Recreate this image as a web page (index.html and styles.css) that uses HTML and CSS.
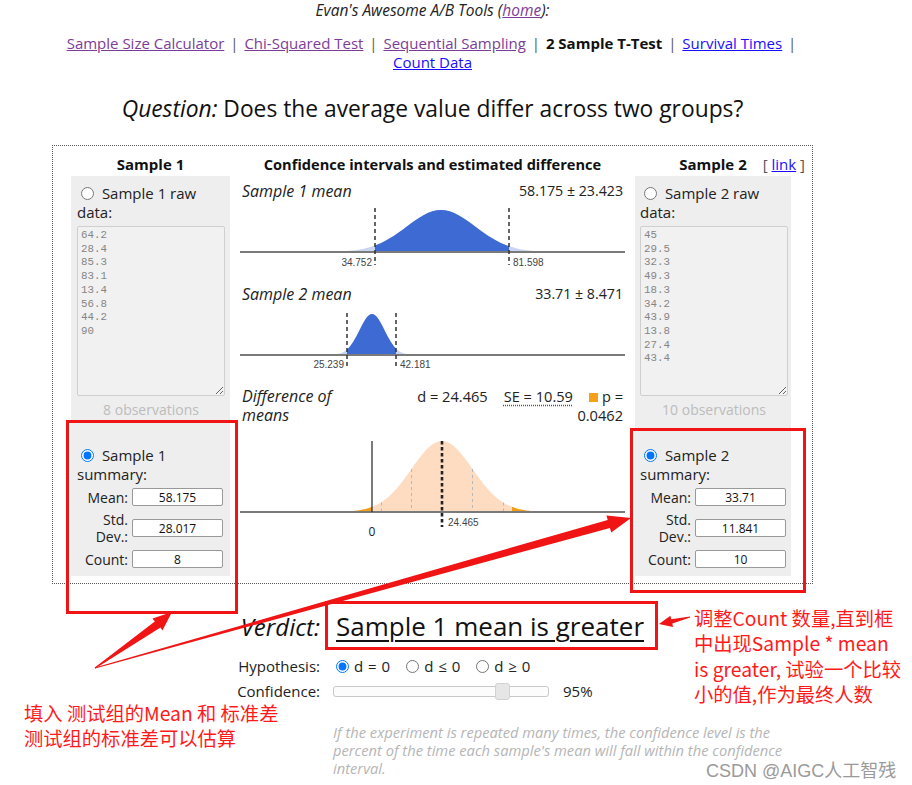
FILE: index.html
```html
<!DOCTYPE html>
<html lang="en">
<head>
<meta charset="utf-8">
<title>2 Sample T-Test</title>
<link rel="stylesheet" href="styles.css">
</head>
<body>
<div class="page">
  <div class="tools">Evan's Awesome A/B Tools (<a class="visited" href="#">home</a>):</div>
  <nav class="nav">
    <a class="visited" href="#">Sample Size Calculator</a> <span class="sep">|</span>
    <a class="visited" href="#">Chi-Squared Test</a> <span class="sep">|</span>
    <a class="visited" href="#">Sequential Sampling</a> <span class="sep">|</span>
    <b class="current">2 Sample T-Test</b> <span class="sep">|</span>
    <a class="fresh" href="#">Survival Times</a> <span class="sep">|</span>
    <a class="fresh" href="#">Count Data</a>
  </nav>
  <h1 class="question"><i>Question:</i> Does the average value differ across two groups?</h1>

  <div class="box">
    <div class="side side-left">
      <div class="side-head">Sample 1</div>
      <div class="panel">
        <label class="opt"><input type="radio" name="mode1"> Sample 1 raw data:</label>
        <textarea class="raw" disabled>64.2
28.4
85.3
83.1
13.4
56.8
44.2
90</textarea>
        <div class="obs">8 observations</div>
        <label class="opt opt-summary"><input type="radio" name="mode1" checked> Sample 1 summary:</label>
        <div class="fields">
          <span class="flabel">Mean:</span><input class="fin" type="text" value="58.175">
          <span class="flabel">Std. Dev.:</span><input class="fin" type="text" value="28.017">
          <span class="flabel">Count:</span><input class="fin" type="text" value="8">
        </div>
      </div>
    </div>

    <div class="center">
      <div class="center-head">Confidence intervals and estimated difference</div>

      <div class="crow">
        <span class="clabel">Sample 1 mean</span>
        <span class="cval">58.175 ± 23.423</span>
      </div>
      <svg class="chart chart1" width="385" height="72" viewBox="0 0 385 72">
        <defs>
          <clipPath id="ci1"><rect x="135" y="0" width="134" height="72"/></clipPath>
        </defs>
        <path class="curve-faint" transform="translate(201 52) scale(34.2 -42)" d="M-4,0 L-3.5,0.0022 L-3,0.0111 L-2.75,0.0228 L-2.5,0.0439 L-2.375,0.0596 L-2.25,0.0796 L-2.125,0.1046 L-2,0.1353 L-1.875,0.1724 L-1.75,0.2163 L-1.625,0.2671 L-1.5,0.3247 L-1.375,0.3886 L-1.25,0.4578 L-1.125,0.5311 L-1,0.6065 L-0.875,0.6819 L-0.75,0.7548 L-0.625,0.8226 L-0.5,0.8825 L-0.375,0.9321 L-0.25,0.9692 L-0.125,0.9922 L0,1 L0.125,0.9922 L0.25,0.9692 L0.375,0.9321 L0.5,0.8825 L0.625,0.8226 L0.75,0.7548 L0.875,0.6819 L1,0.6065 L1.125,0.5311 L1.25,0.4578 L1.375,0.3886 L1.5,0.3247 L1.625,0.2671 L1.75,0.2163 L1.875,0.1724 L2,0.1353 L2.125,0.1046 L2.25,0.0796 L2.375,0.0596 L2.5,0.0439 L2.75,0.0228 L3,0.0111 L3.5,0.0022 L4,0 Z"/>
        <g clip-path="url(#ci1)">
          <path class="curve-blue" transform="translate(201 52) scale(34.2 -42)" d="M-4,0 L-3.5,0.0022 L-3,0.0111 L-2.75,0.0228 L-2.5,0.0439 L-2.375,0.0596 L-2.25,0.0796 L-2.125,0.1046 L-2,0.1353 L-1.875,0.1724 L-1.75,0.2163 L-1.625,0.2671 L-1.5,0.3247 L-1.375,0.3886 L-1.25,0.4578 L-1.125,0.5311 L-1,0.6065 L-0.875,0.6819 L-0.75,0.7548 L-0.625,0.8226 L-0.5,0.8825 L-0.375,0.9321 L-0.25,0.9692 L-0.125,0.9922 L0,1 L0.125,0.9922 L0.25,0.9692 L0.375,0.9321 L0.5,0.8825 L0.625,0.8226 L0.75,0.7548 L0.875,0.6819 L1,0.6065 L1.125,0.5311 L1.25,0.4578 L1.375,0.3886 L1.5,0.3247 L1.625,0.2671 L1.75,0.2163 L1.875,0.1724 L2,0.1353 L2.125,0.1046 L2.25,0.0796 L2.375,0.0596 L2.5,0.0439 L2.75,0.0228 L3,0.0111 L3.5,0.0022 L4,0 Z"/>
        </g>
        <line class="axis" x1="0" y1="52" x2="385" y2="52"/>
        <line class="ci-line" x1="135" y1="8" x2="135" y2="65"/>
        <line class="ci-line" x1="269" y1="8" x2="269" y2="65"/>
        <text class="tick" x="132" y="66" text-anchor="end">34.752</text>
        <text class="tick" x="273" y="66">81.598</text>
      </svg>

      <div class="crow crow2">
        <span class="clabel">Sample 2 mean</span>
        <span class="cval">33.71 ± 8.471</span>
      </div>
      <svg class="chart chart2" width="385" height="67" viewBox="0 0 385 67">
        <defs>
          <clipPath id="ci2"><rect x="107" y="0" width="49" height="67"/></clipPath>
        </defs>
        <path class="curve-faint" transform="translate(132 50) scale(12.5 -41)" d="M-4,0 L-3.5,0.0022 L-3,0.0111 L-2.75,0.0228 L-2.5,0.0439 L-2.375,0.0596 L-2.25,0.0796 L-2.125,0.1046 L-2,0.1353 L-1.875,0.1724 L-1.75,0.2163 L-1.625,0.2671 L-1.5,0.3247 L-1.375,0.3886 L-1.25,0.4578 L-1.125,0.5311 L-1,0.6065 L-0.875,0.6819 L-0.75,0.7548 L-0.625,0.8226 L-0.5,0.8825 L-0.375,0.9321 L-0.25,0.9692 L-0.125,0.9922 L0,1 L0.125,0.9922 L0.25,0.9692 L0.375,0.9321 L0.5,0.8825 L0.625,0.8226 L0.75,0.7548 L0.875,0.6819 L1,0.6065 L1.125,0.5311 L1.25,0.4578 L1.375,0.3886 L1.5,0.3247 L1.625,0.2671 L1.75,0.2163 L1.875,0.1724 L2,0.1353 L2.125,0.1046 L2.25,0.0796 L2.375,0.0596 L2.5,0.0439 L2.75,0.0228 L3,0.0111 L3.5,0.0022 L4,0 Z"/>
        <g clip-path="url(#ci2)">
          <path class="curve-blue" transform="translate(132 50) scale(12.5 -41)" d="M-4,0 L-3.5,0.0022 L-3,0.0111 L-2.75,0.0228 L-2.5,0.0439 L-2.375,0.0596 L-2.25,0.0796 L-2.125,0.1046 L-2,0.1353 L-1.875,0.1724 L-1.75,0.2163 L-1.625,0.2671 L-1.5,0.3247 L-1.375,0.3886 L-1.25,0.4578 L-1.125,0.5311 L-1,0.6065 L-0.875,0.6819 L-0.75,0.7548 L-0.625,0.8226 L-0.5,0.8825 L-0.375,0.9321 L-0.25,0.9692 L-0.125,0.9922 L0,1 L0.125,0.9922 L0.25,0.9692 L0.375,0.9321 L0.5,0.8825 L0.625,0.8226 L0.75,0.7548 L0.875,0.6819 L1,0.6065 L1.125,0.5311 L1.25,0.4578 L1.375,0.3886 L1.5,0.3247 L1.625,0.2671 L1.75,0.2163 L1.875,0.1724 L2,0.1353 L2.125,0.1046 L2.25,0.0796 L2.375,0.0596 L2.5,0.0439 L2.75,0.0228 L3,0.0111 L3.5,0.0022 L4,0 Z"/>
        </g>
        <line class="axis" x1="0" y1="50" x2="385" y2="50"/>
        <line class="ci-line" x1="107" y1="8" x2="107" y2="63"/>
        <line class="ci-line" x1="156" y1="8" x2="156" y2="63"/>
        <text class="tick" x="104" y="63" text-anchor="end">25.239</text>
        <text class="tick" x="160" y="63">42.181</text>
      </svg>

      <div class="crow crow3">
        <span class="clabel clabel-diff">Difference of means</span>
        <div class="stats">
          <div><span class="stat">d = 24.465</span><span class="stat se">SE = 10.59</span><span class="swatch"></span>p =</div>
          <div>0.0462</div>
        </div>
      </div>
      <svg class="chart chart3" width="385" height="105" viewBox="0 0 385 105">
        <defs>
          <clipPath id="tails">
            <rect x="0" y="0" width="132" height="105"/>
            <rect x="272" y="0" width="113" height="105"/>
          </clipPath>
        </defs>
        <path class="curve-peach" transform="translate(202 77) scale(30.5 -71)" d="M-4,0 L-3.5,0.0022 L-3,0.0111 L-2.75,0.0228 L-2.5,0.0439 L-2.375,0.0596 L-2.25,0.0796 L-2.125,0.1046 L-2,0.1353 L-1.875,0.1724 L-1.75,0.2163 L-1.625,0.2671 L-1.5,0.3247 L-1.375,0.3886 L-1.25,0.4578 L-1.125,0.5311 L-1,0.6065 L-0.875,0.6819 L-0.75,0.7548 L-0.625,0.8226 L-0.5,0.8825 L-0.375,0.9321 L-0.25,0.9692 L-0.125,0.9922 L0,1 L0.125,0.9922 L0.25,0.9692 L0.375,0.9321 L0.5,0.8825 L0.625,0.8226 L0.75,0.7548 L0.875,0.6819 L1,0.6065 L1.125,0.5311 L1.25,0.4578 L1.375,0.3886 L1.5,0.3247 L1.625,0.2671 L1.75,0.2163 L1.875,0.1724 L2,0.1353 L2.125,0.1046 L2.25,0.0796 L2.375,0.0596 L2.5,0.0439 L2.75,0.0228 L3,0.0111 L3.5,0.0022 L4,0 Z"/>
        <g clip-path="url(#tails)">
          <path class="curve-orange" transform="translate(202 77) scale(30.5 -71)" d="M-4,0 L-3.5,0.0022 L-3,0.0111 L-2.75,0.0228 L-2.5,0.0439 L-2.375,0.0596 L-2.25,0.0796 L-2.125,0.1046 L-2,0.1353 L-1.875,0.1724 L-1.75,0.2163 L-1.625,0.2671 L-1.5,0.3247 L-1.375,0.3886 L-1.25,0.4578 L-1.125,0.5311 L-1,0.6065 L-0.875,0.6819 L-0.75,0.7548 L-0.625,0.8226 L-0.5,0.8825 L-0.375,0.9321 L-0.25,0.9692 L-0.125,0.9922 L0,1 L0.125,0.9922 L0.25,0.9692 L0.375,0.9321 L0.5,0.8825 L0.625,0.8226 L0.75,0.7548 L0.875,0.6819 L1,0.6065 L1.125,0.5311 L1.25,0.4578 L1.375,0.3886 L1.5,0.3247 L1.625,0.2671 L1.75,0.2163 L1.875,0.1724 L2,0.1353 L2.125,0.1046 L2.25,0.0796 L2.375,0.0596 L2.5,0.0439 L2.75,0.0228 L3,0.0111 L3.5,0.0022 L4,0 Z"/>
        </g>
        <line class="sd-line" x1="141.5" y1="67.5" x2="141.5" y2="77"/>
        <line class="sd-line" x1="171.5" y1="34" x2="171.5" y2="77"/>
        <line class="sd-line" x1="232.5" y1="34" x2="232.5" y2="77"/>
        <line class="sd-line" x1="263.5" y1="67.5" x2="263.5" y2="77"/>
        <line class="axis" x1="0" y1="77" x2="385" y2="77"/>
        <line class="zero-line" x1="132" y1="6" x2="132" y2="77"/>
        <line class="mean-line" x1="202" y1="6" x2="202" y2="92"/>
        <text class="tick" x="208" y="91">24.465</text>
        <text class="zero" x="132" y="101" text-anchor="middle">0</text>
      </svg>
    </div>

    <div class="side side-right">
      <div class="side-head side-head-right"><span>Sample 2</span><span class="link">[ <a class="fresh" href="#">link</a> ]</span></div>
      <div class="panel panel-right">
        <label class="opt"><input type="radio" name="mode2"> Sample 2 raw data:</label>
        <textarea class="raw" disabled>45
29.5
32.3
49.3
18.3
34.2
43.9
13.8
27.4
43.4</textarea>
        <div class="obs">10 observations</div>
        <label class="opt opt-summary"><input type="radio" name="mode2" checked> Sample 2 summary:</label>
        <div class="fields">
          <span class="flabel">Mean:</span><input class="fin" type="text" value="33.71">
          <span class="flabel">Std. Dev.:</span><input class="fin" type="text" value="11.841">
          <span class="flabel">Count:</span><input class="fin" type="text" value="10">
        </div>
      </div>
    </div>
  </div>

  <div class="frow frow-verdict">
    <span class="flbl verdict-lbl">Verdict:</span>
    <span class="verdict">Sample 1 mean is greater</span>
  </div>
  <div class="frow frow-hyp">
    <span class="flbl">Hypothesis:</span>
    <div class="hyps">
      <label class="hyp"><input type="radio" name="hyp" checked>d = 0</label>
      <label class="hyp"><input type="radio" name="hyp">d ≤ 0</label>
      <label class="hyp"><input type="radio" name="hyp">d ≥ 0</label>
    </div>
  </div>
  <div class="frow frow-conf">
    <span class="flbl">Confidence:</span>
    <div class="conf">
      <input class="slider" type="range" min="80" max="99" step="0.1" value="95.4">
      <span>95%</span>
    </div>
  </div>
  <p class="note">If the experiment is repeated many times, the confidence level is the percent of the time each sample's mean will fall within the confidence interval.</p>
</div>

<svg class="marks" width="912" height="785" viewBox="0 0 912 785">
  <rect x="67.5" y="421.5" width="169" height="191"/>
  <rect x="631.5" y="429.5" width="173" height="162"/>
  <rect x="326.5" y="602.5" width="330" height="46"/>
  <polygon points="95.3,668.4 160.5,627.5 162.4,630.6 172,612 152.5,618.6 154.8,621.6 94.7,667.6"/>
  <polygon points="95.1,668.5 609.9,528 611.2,532.4 631,518 606.4,515.4 607.7,519.9 94.9,667.5"/>
  <polygon points="690.1,617.6 672.3,623.4 673,627 659,624 670.4,615.7 671.2,619.2 689.9,616.4"/>
</svg>
<div class="note-red note-right">调整Count 数量,直到框<br>中出现Sample * mean<br>is greater, 试验一个比较<br>小的值,作为最终人数</div>
<div class="note-red note-left">填入 测试组的Mean 和 标准差<br>测试组的标准差可以估算</div>
<div class="watermark">CSDN @AIGC人工智残</div>
</body>
</html>
```

FILE: styles.css
```css
html, body {
  margin: 0;
  padding: 0;
}
body {
  position: relative;
  width: 912px;
  height: 785px;
  overflow: hidden;
  background: #fff;
  color: #111;
  font-family: "Open Sans", "Noto Sans", sans-serif;
  font-size: 15px;
}
.page {
  width: 865px;
}
a.visited { color: #7d3c98; }
a.fresh { color: #1a0dff; }

.tools {
  text-align: center;
  font-style: italic;
  font-size: 15.5px;
  line-height: 20px;
  color: #222;
}
.nav {
  width: 761px;
  margin: 14px auto 0;
  text-align: center;
  font-size: 15px;
  line-height: 19px;
}
.sep { color: #555; margin: 0 2px; }
.current { color: #111; }

.question {
  margin: 22px 0 0;
  text-align: center;
  font-weight: normal;
  font-size: 22.8px;
  line-height: 30px;
  color: #111;
}

.box {
  box-sizing: border-box;
  width: 761px;
  height: 439px;
  margin: 21px 0 0 52px;
  padding-top: 8px;
  border: 1px dotted #555;
  display: grid;
  grid-template-columns: 187px 385px 187px;
}

.side-left { padding-left: 18px; }
.side-left .panel, .side-left .side-head { width: 159px; }
.side-right { padding-left: 10px; }
.side-right .panel { width: 156px; }

.side-head {
  box-sizing: border-box;
  text-align: center;
  font-weight: bold;
  line-height: 20px;
}
.side-head-right {
  display: flex;
  justify-content: flex-end;
  gap: 16px;
  padding-right: 7px;
}
.link { font-weight: normal; color: #555; }

.panel {
  box-sizing: border-box;
  margin-top: 2px;
  padding: 8px 5px 8px 6px;
  background: #eeeeee;
}
.panel-right { padding: 8px 3px 8px 5px; }
.opt {
  display: block;
  line-height: 19px;
  color: #222;
}
.opt input {
  margin: 0 4px 0 4px;
  width: 13px;
  height: 13px;
  vertical-align: -1px;
}
.opt-summary { margin-top: 27px; }

.raw {
  display: block;
  box-sizing: border-box;
  width: 148px;
  height: 170px;
  margin: 4px 0 0;
  padding: 2px 3px;
  border: 1px solid #cfcfcf;
  border-radius: 2px;
  background: #f1f1f1;
  color: #858585;
  font-family: "Liberation Mono", "DejaVu Sans Mono", monospace;
  font-size: 10.8px;
  line-height: 13.7px;
  resize: vertical;
  overflow: hidden;
}
.obs {
  margin-top: 4px;
  text-align: center;
  color: #bcbcbc;
  font-size: 14px;
  line-height: 19px;
}

.fields {
  margin-top: 4px;
  display: grid;
  grid-template-columns: 51px 91px;
  column-gap: 4px;
  row-gap: 5px;
  align-items: center;
}
.flabel {
  text-align: right;
  font-size: 14px;
  line-height: 17px;
  color: #222;
}
.fin {
  box-sizing: border-box;
  width: 91px;
  height: 18px;
  margin: 0;
  padding: 0;
  border: 1px solid #999;
  border-radius: 2px;
  background: #fff;
  text-align: center;
  font-family: "Open Sans", sans-serif;
  font-size: 12px;
  color: #111;
}

.center-head {
  text-align: center;
  font-weight: bold;
  font-size: 14.6px;
  line-height: 20px;
  color: #111;
}
.crow {
  display: flex;
  justify-content: space-between;
  align-items: flex-start;
  margin-top: 8px;
  padding: 0 2px;
  line-height: 18px;
  color: #222;
}
.crow2 { margin-top: 13px; }
.crow3 { margin-top: 15px; line-height: 19px; }
.clabel { font-style: italic; font-size: 16px; }
.cval { font-size: 14.2px; }
.clabel-diff { width: 112px; }
.stats { text-align: right; font-size: 14.6px; }
.stat { margin-right: 16px; }
.se {
  text-decoration: underline dotted #555;
  text-underline-offset: 3px;
}
.swatch {
  display: inline-block;
  width: 9px;
  height: 9px;
  margin-right: 4px;
  background: #f6a01a;
}

.chart { display: block; }
.chart2 { margin-top: 2px; }
.chart3 { margin-top: 10px; }
.curve-faint { fill: #c9d5f3; }
.curve-blue { fill: #3e6bd3; }
.curve-peach { fill: #fddcc2; }
.curve-orange { fill: #f29d16; }
.axis { stroke: #7a7a7a; stroke-width: 2; }
.ci-line { stroke: #333; stroke-width: 1.5; stroke-dasharray: 4 3; }
.sd-line { stroke: #b8b8b8; stroke-width: 1; stroke-dasharray: 3 3; }
.zero-line { stroke: #222; stroke-width: 1.2; }
.mean-line { stroke: #222; stroke-width: 2.6; stroke-dasharray: 3.5 2.5; }
.tick { font-family: "Liberation Sans", Arial, sans-serif; font-size: 10px; fill: #444; }
.zero { font-family: "Open Sans", sans-serif; font-size: 12px; fill: #222; }

.frow {
  display: grid;
  grid-template-columns: 270px 1fr;
  column-gap: 13px;
  margin-left: 50px;
  width: 600px;
  color: #222;
}
.flbl { text-align: right; }
.frow-verdict {
  margin-top: 22px;
  line-height: 40px;
  align-items: baseline;
}
.verdict-lbl { font-style: italic; font-size: 24px; color: #111; }
.verdict {
  font-size: 26px;
  color: #111;
  text-decoration: underline;
  text-underline-offset: 4px;
  text-decoration-thickness: 1.5px;
  padding-left: 3px;
}
.frow-hyp { margin-top: 9px; line-height: 20px; }
.hyps { display: flex; }
.hyp { margin-right: 13px; word-spacing: 1px; }
.hyp input {
  margin: 0 5px 0 3px;
  width: 13px;
  height: 13px;
  vertical-align: -1px;
}
.frow-conf { margin-top: 6px; line-height: 19px; }
.conf { display: flex; align-items: center; gap: 14px; }
.slider {
  -webkit-appearance: none;
  appearance: none;
  box-sizing: border-box;
  width: 216px;
  height: 11px;
  margin: 0;
  border: 1px solid #c9c9c9;
  border-radius: 3px;
  background: #fcfcfc;
}
.slider::-webkit-slider-thumb {
  -webkit-appearance: none;
  appearance: none;
  width: 15px;
  height: 17px;
  border: 1px solid #d2d2d2;
  border-radius: 3px;
  background: #e6e6e6;
}
.note {
  margin: 22px 0 0 333px;
  width: 466px;
  font-style: italic;
  font-size: 14.7px;
  line-height: 18px;
  color: #b5b5b5;
}

.marks {
  position: absolute;
  left: 0;
  top: 0;
  pointer-events: none;
}
.marks rect { fill: none; stroke: #f01414; stroke-width: 3; }
.marks polygon { fill: #f01414; }

.note-red {
  position: absolute;
  color: #ff1a1a;
  font-family: "Noto Sans CJK SC", "Noto Sans", sans-serif;
  font-size: 19.3px;
  line-height: 25.3px;
  white-space: nowrap;
}
.note-right { left: 694px; top: 606px; }
.note-left { left: 24px; top: 701px; }

.watermark {
  position: absolute;
  left: 706px;
  top: 756px;
  font-family: "Liberation Sans", "Noto Sans CJK SC", sans-serif;
  font-size: 18px;
  color: #9a9a9a;
}
```
